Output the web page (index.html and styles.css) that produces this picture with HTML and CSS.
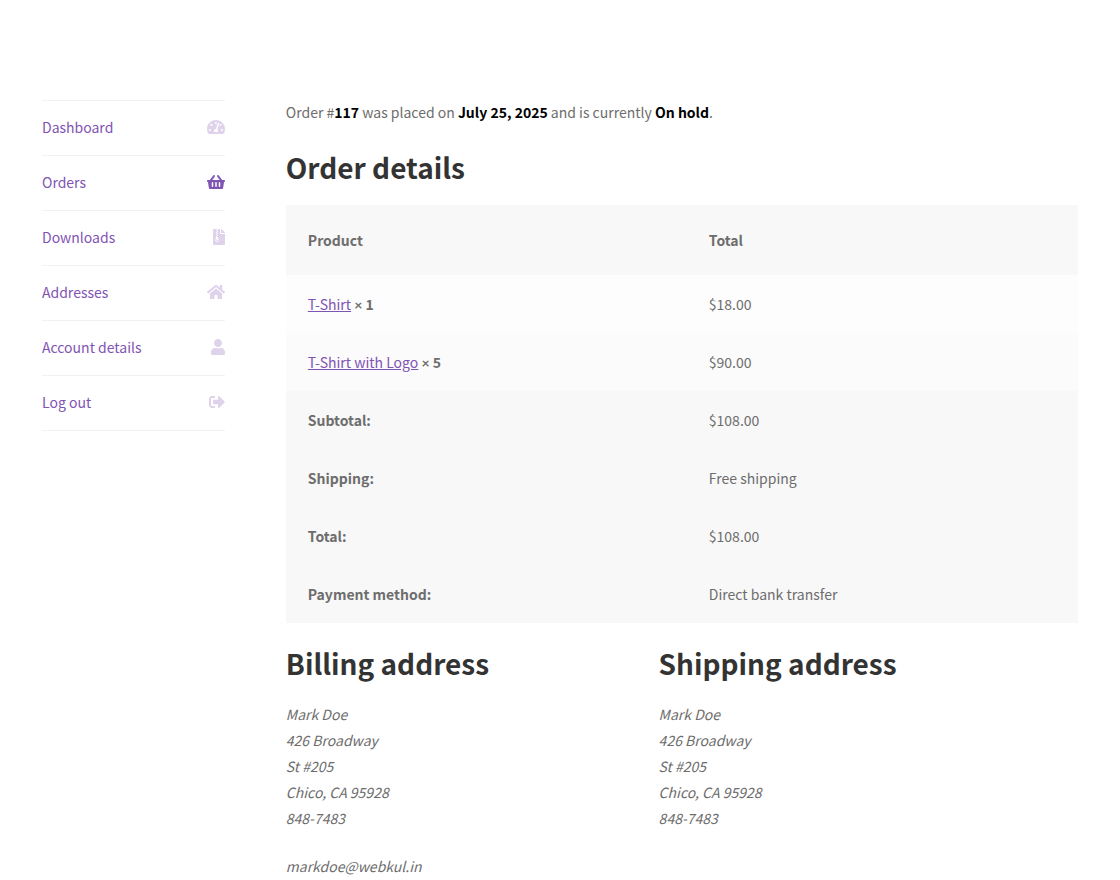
FILE: index.html
```html
<!DOCTYPE html>
<html lang="en">
<head>
<meta charset="utf-8">
<meta name="viewport" content="width=device-width, initial-scale=1">
<title>Order #117</title>
<link rel="stylesheet" href="styles.css">
</head>
<body>
<div class="page">
  <nav class="account-nav" aria-label="Account">
    <ul class="nav-list">
      <li class="nav-item"><a class="nav-link" href="#">Dashboard<svg class="icon" viewBox="0 0 576 512" width="18" height="16" aria-hidden="true"><path d="M288 32C128.940 32 0 160.940 0 320c0 52.800 14.250 102.260 39.060 144.800 5.610 9.620 16.300 15.200 27.440 15.200h443c11.140 0 21.830-5.580 27.440-15.200C561.750 422.260 576 372.800 576 320c0-159.060-128.940-288-288-288zm0 64c14.710 0 26.580 10.130 30.320 23.650-1.110 2.260-2.640 4.230-3.450 6.670l-9.220 27.670c-5.130 3.490-10.970 6.010-17.640 6.010-17.670 0-32-14.330-32-32S270.330 96 288 96zM96 384c-17.670 0-32-14.330-32-32s14.330-32 32-32 32 14.330 32 32-14.330 32-32 32zm48-160c-17.670 0-32-14.330-32-32s14.330-32 32-32 32 14.330 32 32-14.330 32-32 32zm246.770-72.410l-61.330 184C343.130 347.330 352 364.540 352 384c0 11.720-3.380 22.550-8.880 32H232.880c-5.500-9.450-8.880-20.280-8.880-32 0-33.940 26.500-61.430 59.900-63.590l61.340-184.010c4.170-12.560 17.730-19.450 30.360-15.170 12.570 4.190 19.350 17.790 15.170 30.360zm14.660 57.200l15.520-46.550c3.470-1.290 7.130-2.230 11.050-2.230 17.670 0 32 14.330 32 32s-14.330 32-32 32c-11.380-.010-20.890-6.280-26.570-15.220zM480 384c-17.670 0-32-14.330-32-32s14.330-32 32-32 32 14.330 32 32-14.330 32-32 32z"/></svg></a></li>
      <li class="nav-item nav-item-active"><a class="nav-link" href="#" aria-current="page">Orders<svg class="icon" viewBox="0 0 576 512" width="18" height="16" aria-hidden="true"><path d="M576 216v16c0 13.255-10.745 24-24 24h-8l-26.113 182.788C514.509 462.435 494.257 480 470.370 480H105.630c-23.887 0-44.139-17.565-47.518-41.212L32 256h-8c-13.255 0-24-10.745-24-24v-16c0-13.255 10.745-24 24-24h67.341l106.780-146.821c10.395-14.292 30.407-17.453 44.701-7.058 14.293 10.395 17.453 30.408 7.058 44.701L170.477 192h235.046L326.120 82.821c-10.395-14.292-7.234-34.306 7.059-44.701 14.291-10.395 34.306-7.235 44.701 7.058L484.659 192H552c13.255 0 24 10.745 24 24zM312 392V280c0-13.255-10.745-24-24-24s-24 10.745-24 24v112c0 13.255 10.745 24 24 24s24-10.745 24-24zm112 0V280c0-13.255-10.745-24-24-24s-24 10.745-24 24v112c0 13.255 10.745 24 24 24s24-10.745 24-24zm-224 0V280c0-13.255-10.745-24-24-24s-24 10.745-24 24v112c0 13.255 10.745 24 24 24s24-10.745 24-24z"/></svg></a></li>
      <li class="nav-item"><a class="nav-link" href="#">Downloads<svg class="icon" viewBox="0 0 384 512" width="12" height="16" aria-hidden="true"><path d="M377 105L279.100 7c-4.500-4.500-10.600-7-17-7H256v128h128v-6.100c0-6.300-2.500-12.400-7-16.900zM128.400 336c-17.900 0-32.400 12.100-32.400 27 0 15 14.600 27 32.500 27s32.400-12.100 32.400-27-14.600-27-32.500-27zM224 136V0h-63.600v32h-32V0H24C10.700 0 0 10.700 0 24v464c0 13.300 10.700 24 24 24h336c13.300 0 24-10.700 24-24V160H248c-13.200 0-24-10.800-24-24zM95.900 32h32v32h-32V32zm32.300 384c-33.200 0-58-30.400-51.400-62.900L96.400 256v-32h32v-32h-32v-32h32v-32h-32V96h32V64h32v32h-32v32h32v32h-32v32h32v32h-32v32h22.100c5.700 0 10.700 4.100 11.800 9.700l17.300 87.700c6.400 32.400-18.400 62.600-51.400 62.600z"/></svg></a></li>
      <li class="nav-item"><a class="nav-link" href="#">Addresses<svg class="icon" viewBox="0 0 576 512" width="18" height="16" aria-hidden="true"><path d="M280.370 148.260L96 300.110V464a16 16 0 0 0 16 16l112.060-.290a16 16 0 0 0 15.920-16V368a16 16 0 0 1 16-16h64a16 16 0 0 1 16 16v95.640a16 16 0 0 0 16 16.050L464 480a16 16 0 0 0 16-16V300L295.670 148.260a12.190 12.190 0 0 0-15.300 0zM571.600 251.470L488 182.560V44.050a12 12 0 0 0-12-12h-56a12 12 0 0 0-12 12v72.610L318.470 43a48 48 0 0 0-61 0L4.340 251.470a12 12 0 0 0-1.600 16.900l25.500 31A12 12 0 0 0 45.150 301l235.220-193.740a12.190 12.190 0 0 1 15.300 0L530.900 301a12 12 0 0 0 16.900-1.600l25.500-31a12 12 0 0 0-1.700-16.930z"/></svg></a></li>
      <li class="nav-item"><a class="nav-link" href="#">Account details<svg class="icon" viewBox="0 0 448 512" width="14" height="16" aria-hidden="true"><path d="M224 256c70.700 0 128-57.300 128-128S294.700 0 224 0 96 57.300 96 128s57.300 128 128 128zm89.600 32h-16.700c-22.200 10.200-46.900 16-72.900 16s-50.600-5.800-72.900-16h-16.700C60.200 288 0 348.200 0 422.400V464c0 26.500 21.500 48 48 48h352c26.500 0 48-21.500 48-48v-41.600c0-74.200-60.200-134.400-134.400-134.400z"/></svg></a></li>
      <li class="nav-item"><a class="nav-link" href="#">Log out<svg class="icon" viewBox="0 0 512 512" width="16" height="16" aria-hidden="true"><path d="M497 273L329 441c-15 15-41 4.500-41-17v-96H152c-13.300 0-24-10.700-24-24v-96c0-13.300 10.700-24 24-24h136V88c0-21.400 25.900-32 41-17l168 168c9.300 9.400 9.300 24.600 0 34zM192 436v-40c0-6.600-5.400-12-12-12H96c-17.700 0-32-14.300-32-32V160c0-17.700 14.300-32 32-32h84c6.600 0 12-5.400 12-12V76c0-6.600-5.400-12-12-12H96c-53 0-96 43-96 96v192c0 53 43 96 96 96h84c6.600 0 12-5.400 12-12z"/></svg></a></li>
    </ul>
  </nav>
  <main class="content">
    <p class="order-status">Order #<mark class="mark">117</mark> was placed on <mark class="mark">July 25, 2025</mark> and is currently <mark class="mark">On hold</mark>.</p>
    <section class="order-details">
      <h2 class="title">Order details</h2>
      <table class="order-table">
        <thead>
          <tr><th class="name-col" scope="col">Product</th><th scope="col">Total</th></tr>
        </thead>
        <tbody>
          <tr><td><a class="product-link" href="#">T-Shirt</a> <strong><span class="times">×</span> 1</strong></td><td>$18.00</td></tr>
          <tr><td><a class="product-link" href="#">T-Shirt with Logo</a> <strong><span class="times">×</span> 5</strong></td><td>$90.00</td></tr>
        </tbody>
        <tfoot>
          <tr><th scope="row">Subtotal:</th><td>$108.00</td></tr>
          <tr><th scope="row">Shipping:</th><td>Free shipping</td></tr>
          <tr><th scope="row">Total:</th><td>$108.00</td></tr>
          <tr><th scope="row">Payment method:</th><td>Direct bank transfer</td></tr>
        </tfoot>
      </table>
    </section>
    <section class="addresses">
      <div class="address-col">
        <h2 class="title">Billing address</h2>
        <address class="address">Mark Doe<br>426 Broadway<br>St #205<br>Chico, CA 95928<br>848-7483<p class="email">markdoe@webkul.in</p></address>
      </div>
      <div class="address-col">
        <h2 class="title">Shipping address</h2>
        <address class="address">Mark Doe<br>426 Broadway<br>St #205<br>Chico, CA 95928<br>848-7483</address>
      </div>
    </section>
  </main>
</div>
</body>
</html>
```
FILE: styles.css
```css
*, *::before, *::after {
  box-sizing: border-box;
}

body {
  margin: 0;
  background: #fff;
  color: #6d6d6d;
  font-family: "Source Sans Pro", "Noto Sans CJK SC", "Open Sans", sans-serif;
  font-size: 14px;
  line-height: 26px;
}

.page {
  display: grid;
  grid-template-columns: 3fr 13fr;
  column-gap: 61px;
  padding: 100px 42px 0;
}

.nav-list {
  margin: 0;
  padding: 0;
  list-style: none;
  border-top: 1px solid #f2f2f2;
}

.nav-item {
  border-bottom: 1px solid #f2f2f2;
}

.nav-link {
  display: flex;
  align-items: center;
  justify-content: space-between;
  padding: 13px 0 15px;
  color: #7f54b3;
  text-decoration: none;
}

.icon {
  fill: currentColor;
  opacity: 0.25;
}

.nav-item-active .icon {
  opacity: 1;
}

.order-status {
  margin: 0 0 23px;
  line-height: 24px;
}

.mark {
  background: none;
  color: #000;
  font-weight: 700;
}

.title {
  margin: 0 0 18px;
  color: #333;
  font-size: 28px;
  font-weight: 700;
  line-height: 40px;
}

.order-table {
  width: 100%;
  margin-bottom: 20px;
  border-collapse: collapse;
  table-layout: fixed;
}

.order-table th,
.order-table td {
  padding: 16px 22px;
  text-align: left;
  vertical-align: top;
}

.order-table thead th {
  padding: 22px;
}

.order-table .name-col {
  width: 401px;
}

.order-table thead th,
.order-table tfoot th,
.order-table tfoot td {
  background: #f8f8f8;
}

.order-table tbody td {
  background: #fdfdfd;
}

.order-table tbody tr:nth-child(2n) td {
  background: #fbfbfb;
}

.product-link {
  color: #7f54b3;
  text-decoration: underline;
}

.times {
  font-family: Lato, "Open Sans", sans-serif;
  line-height: 1;
}

.addresses {
  display: grid;
  grid-template-columns: 41% 41%;
  column-gap: 48px;
}

.address {
  font-style: italic;
}

.email {
  margin: 22px 0 0;
}
```
